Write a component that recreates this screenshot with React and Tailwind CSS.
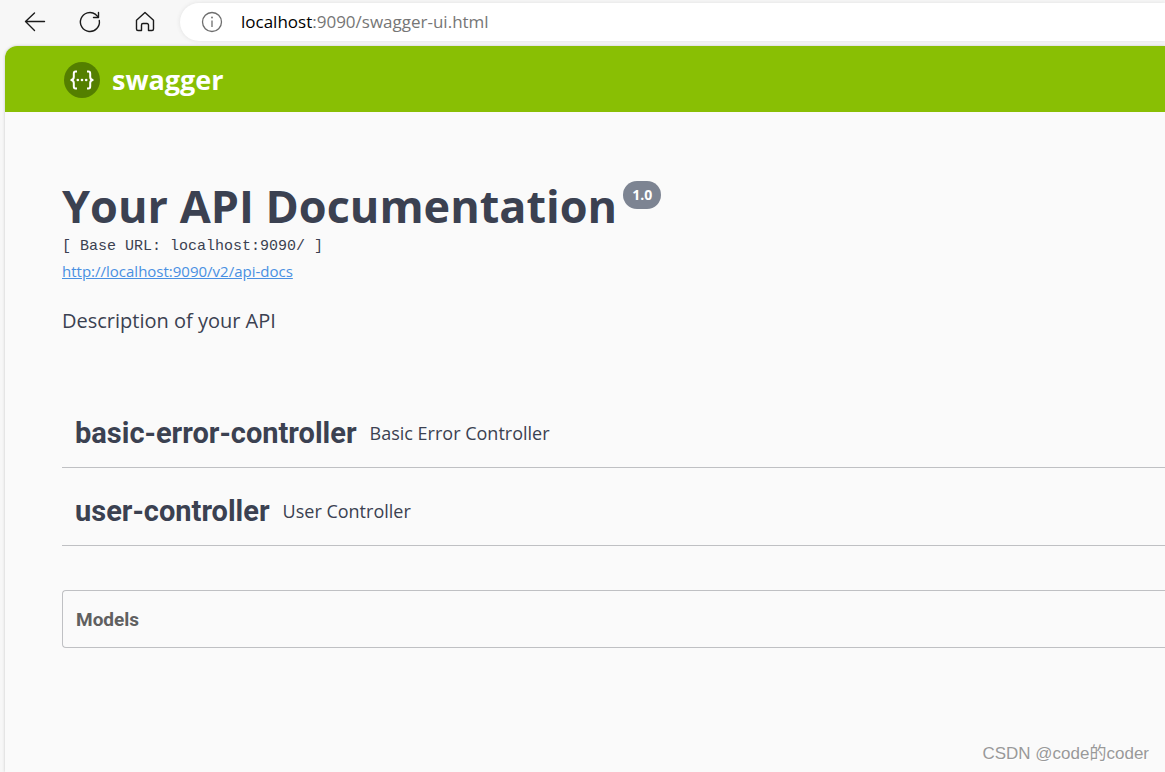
import React from 'react';

const tags = [
  { name: 'basic-error-controller', description: 'Basic Error Controller' },
  { name: 'user-controller', description: 'User Controller' },
];

const BrowserBar = () => (
  <div className="flex items-center h-[46px] pl-[23px] pb-[3px] text-[#1b1b1b]">
    <button aria-label="Back" className="w-6 h-6 mr-[31px]">
      <svg className="w-6 h-6" viewBox="0 0 24 24" fill="none" stroke="currentColor" strokeWidth="1.4" strokeLinecap="round" strokeLinejoin="round">
        <path d="M21.5 11.500H2.5M11.500 3L2.5 11.500l9 9" />
      </svg>
    </button>
    <button aria-label="Refresh" className="w-6 h-6 mr-[31px]">
      <svg className="w-6 h-6" viewBox="0 0 24 24" fill="none" stroke="currentColor" strokeWidth="1.4" strokeLinecap="round" strokeLinejoin="round">
        <path d="M21.3 10.5A9.5 9.5 0 1 1 17.6 4.4L20.3 7" />
        <path d="M20.5 2.5V7.5H15.5" />
      </svg>
    </button>
    <button aria-label="Home" className="w-6 h-6 mr-[23px]">
      <svg className="w-6 h-6" viewBox="0 0 24 24" fill="none" stroke="currentColor" strokeWidth="1.4" strokeLinecap="round" strokeLinejoin="round">
        <path d="M3.5 10.200L12 2.500l8.500 7.700v8.800a1.500 1.500 0 0 1-1.500 1.500h-3.500v-5.500a1.500 1.500 0 0 0-1.500-1.500h-4a1.500 1.500 0 0 0-1.500 1.500v5.500H5a1.500 1.500 0 0 1-1.500-1.500z" />
      </svg>
    </button>
    <div className="flex flex-1 items-center h-[38px] pl-[21px] bg-white rounded-l-full shadow-[0_0_4px_#e0e0e0]">
      <svg className="w-[22px] h-[22px] mr-[18px] text-[#6e6e6e]" viewBox="0 0 22 22" fill="none" stroke="currentColor" strokeWidth="1.3">
        <circle cx="11" cy="11" r="9.500" />
        <path d="M11 9.500v6.500" />
        <circle cx="11" cy="6.500" r="0.900" fill="currentColor" stroke="none" />
      </svg>
      <label htmlFor="address" className="text-[17px] leading-6 text-black">localhost</label>
      <input
        id="address"
        type="text"
        defaultValue=":9090/swagger-ui.html"
        className="flex-1 min-w-0 text-[17px] leading-6 text-[#767676] bg-transparent outline-none"
      />
    </div>
  </div>
);

const Topbar = () => (
  <header className="flex items-center h-[66px] pt-0.5 pl-[58px] bg-[#89bf04]">
    <a href="#" className="flex items-center">
      <svg className="w-[38px] h-[38px] mr-[11px]" viewBox="0 0 38 38" fill="none">
        <circle cx="19" cy="19" r="18" fill="#547f00" />
        <g stroke="#fff" strokeWidth="2" strokeLinejoin="round">
          <path d="M14 10.500h-1.500q-1.700 0-1.700 2.200v3.300q0 2.500-2.500 3q2.500 0.500 2.500 3v3.300q0 2.200 1.700 2.200H14" />
          <path d="M24 10.500h1.500q1.700 0 1.700 2.200v3.300q0 2.500 2.500 3q-2.500 0.500-2.500 3v3.300q0 2.200-1.700 2.200H24" />
        </g>
        <g fill="#fff">
          <circle cx="14.800" cy="19" r="1.300" />
          <circle cx="19" cy="19" r="1.300" />
          <circle cx="23.200" cy="19" r="1.300" />
        </g>
      </svg>
      <span className="text-[27px] leading-8 font-bold text-white">swagger</span>
    </a>
  </header>
);

const Info = () => (
  <section className="pt-[67px]">
    <div className="flex items-start">
      <h1 className="text-[45px] leading-[54px] font-bold">Your API Documentation</h1>
      <span className="ml-1.5 mt-0.5 px-[9px] rounded-full bg-[#7d8492] text-sm leading-7 font-bold text-white">1.0</span>
    </div>
    <pre className="pt-0.5 text-[15px] leading-6 font-['Liberation_Mono',monospace]">[ Base URL: localhost:9090/ ]</pre>
    <a href="#" className="block text-[15px] leading-6 text-[#4990e2] underline">http://localhost:9090/v2/api-docs</a>
    <p className="mt-[22px] text-xl leading-8">Description of your API</p>
  </section>
);

const TagRow = ({ tag }) => (
  <div className="flex items-center h-[78px] pt-2 pl-[13px] border-b border-[#bfc0c3]">
    <h2 className="text-[29px] leading-8 font-bold font-[Roboto,sans-serif]">{tag.name}</h2>
    <p className="ml-[13px] text-lg leading-6">{tag.description}</p>
  </div>
);

const App = () => {
  return (
    <div className="relative flex flex-col min-h-screen overflow-hidden bg-[#f7f7f7] font-['Open_Sans',sans-serif] text-[#3b4151]">
      <BrowserBar />
      <div className="flex-1 ml-[5px] rounded-tl-xl overflow-hidden bg-[#fafafa] shadow-[0_0_3px_#c4c4c4]">
        <Topbar />
        <main className="pl-[57px]">
          <Info />
          <section className="mt-[53px]">
            {tags.map((tag) => (
              <TagRow key={tag.name} tag={tag} />
            ))}
          </section>
          <section className="mt-11 flex items-center h-[58px] pt-0.5 pl-[13px] border border-r-0 border-[#bfc0c3] rounded-l">
            <h3 className="text-[19px] leading-6 font-bold font-[Roboto,sans-serif] text-[#606060]">Models</h3>
          </section>
        </main>
      </div>
      <span className="absolute right-4 bottom-1 text-[17px] leading-7 font-['Liberation_Sans','Noto_Sans_CJK_SC',sans-serif] text-[#999] [text-shadow:1px_1px_0_#fff]">
        CSDN @code的coder
      </span>
    </div>
  );
};

export default App;
